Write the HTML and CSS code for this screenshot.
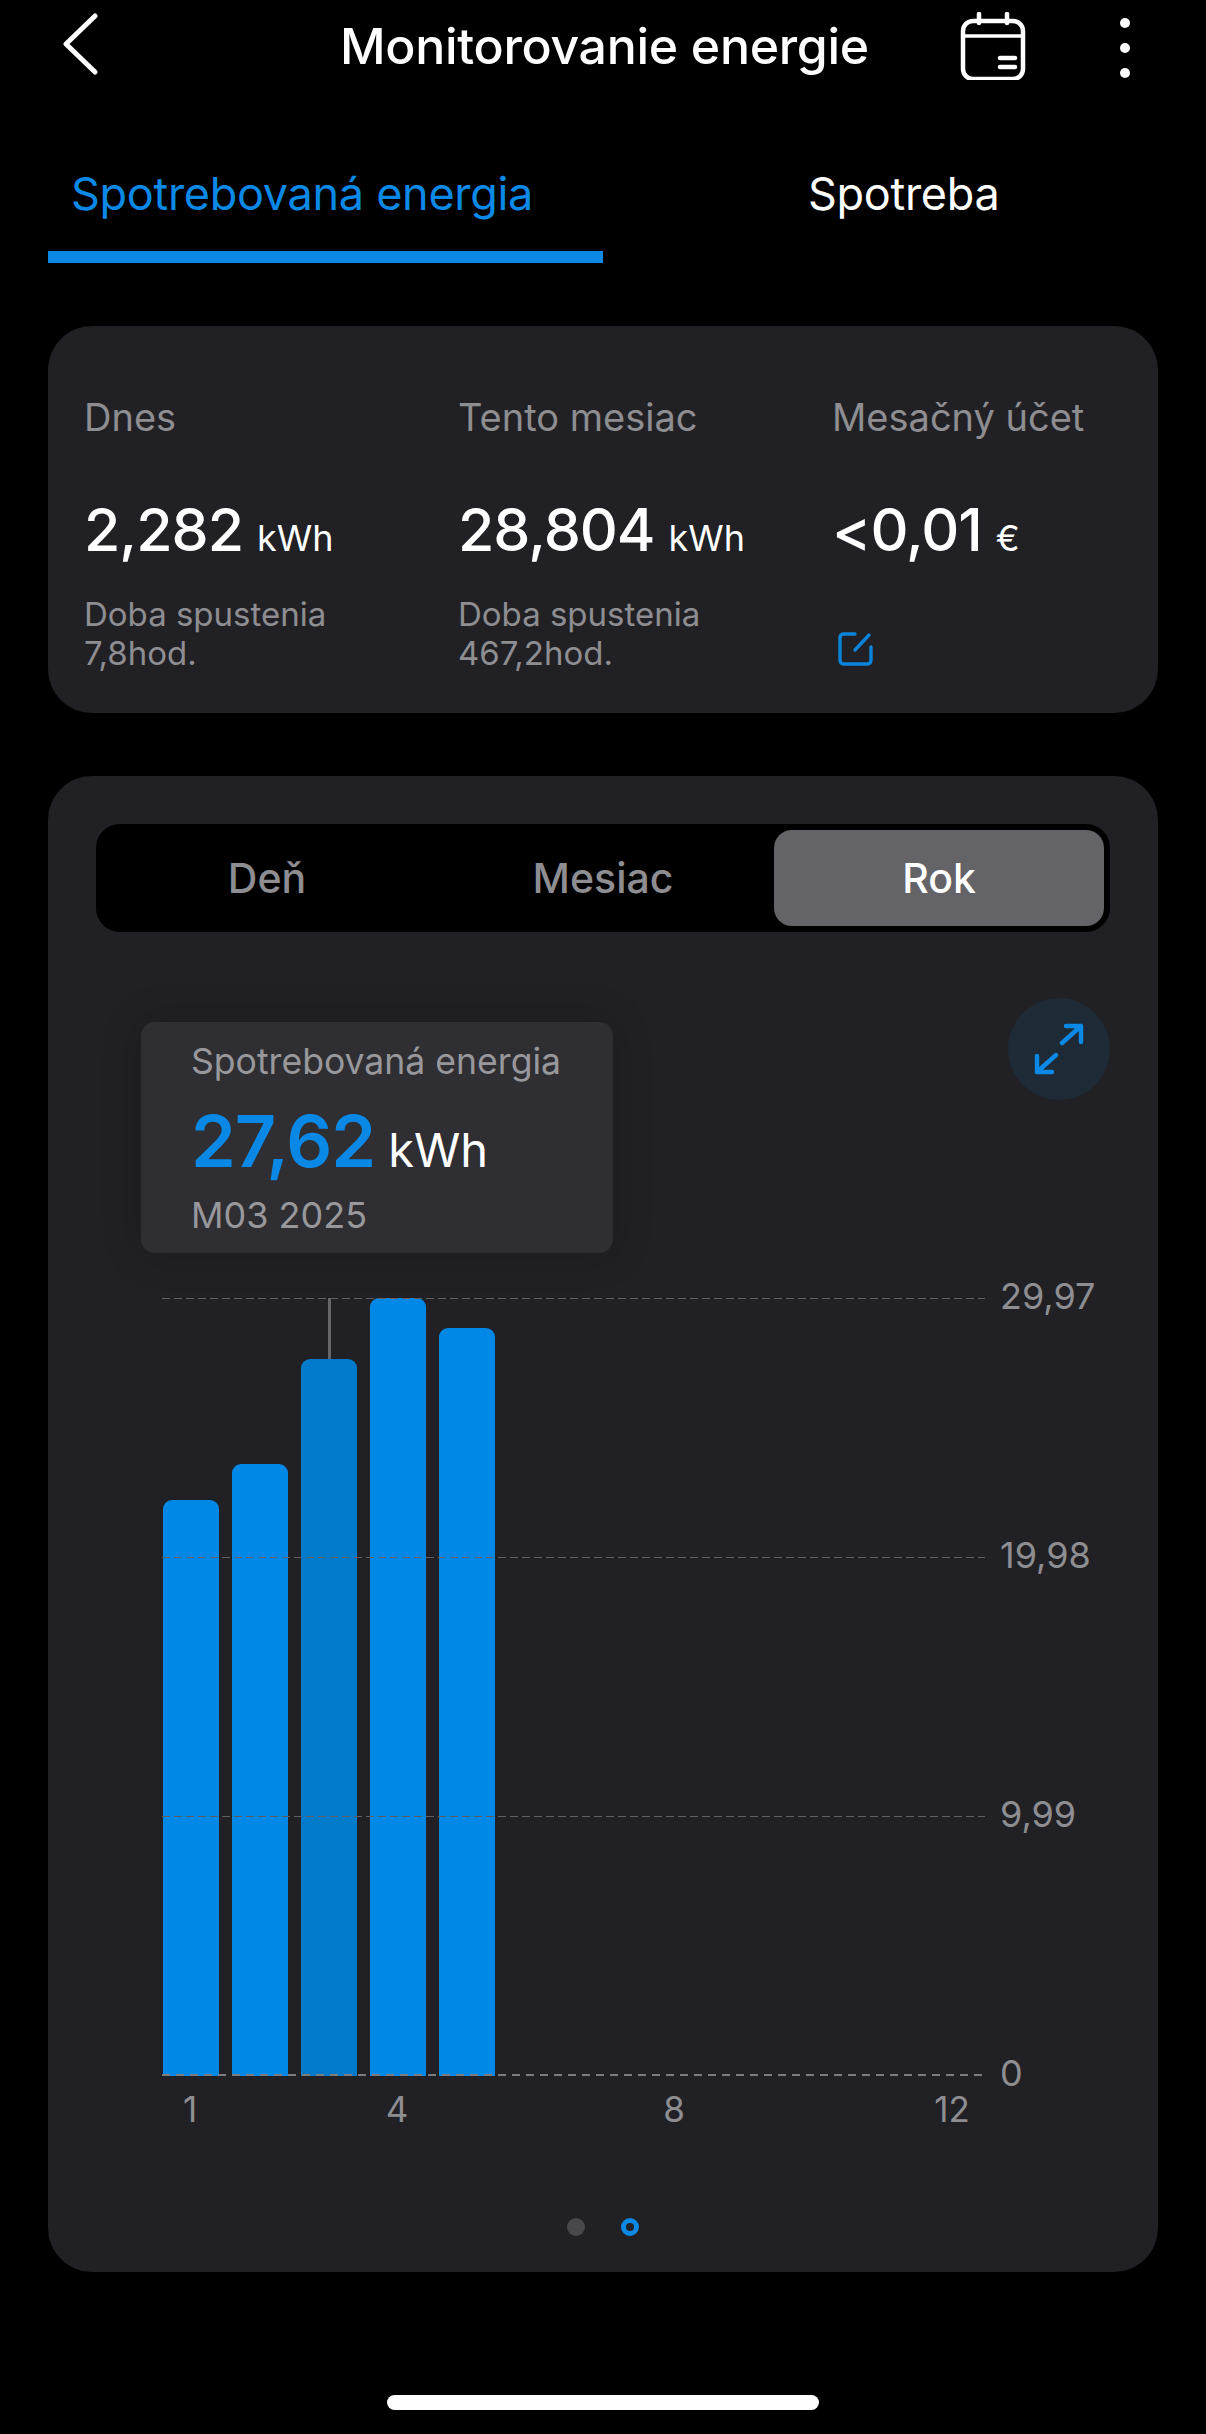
FILE: index.html
```html
<!DOCTYPE html>
<html lang="sk">
<head>
<meta charset="utf-8">
<title>Monitorovanie energie</title>
<link rel="stylesheet" href="styles.css">
</head>
<body>
<div class="page">

  <div class="header">
    <svg class="back-icon" width="36" height="62" viewBox="0 0 36 62"><path d="M33 3 L4 31 L33 59" fill="none" stroke="#fff" stroke-width="5" stroke-linecap="round" stroke-linejoin="round"/></svg>
    <div class="title">Monitorovanie energie</div>
    <svg class="cal-icon" width="66" height="68" viewBox="0 0 66 68">
      <rect x="3" y="9" width="60" height="58" rx="10" fill="none" stroke="#fff" stroke-width="4.5"/>
      <path d="M3 24 H63" stroke="#fff" stroke-width="3.5"/>
      <path d="M19 2 V11 M47 2 V11" stroke="#fff" stroke-width="4.5" stroke-linecap="round"/>
      <path d="M40 46 H55 M40 55 H55" stroke="#fff" stroke-width="4.5" stroke-linecap="round"/>
    </svg>
    <svg class="more-icon" width="12" height="62" viewBox="0 0 12 62">
      <circle cx="6" cy="6" r="5"/><circle cx="6" cy="31" r="5"/><circle cx="6" cy="56" r="5"/>
    </svg>
  </div>

  <div class="tabs">
    <div class="tab tab-on">Spotrebovaná energia</div>
    <div class="tab tab-off">Spotreba</div>
  </div>

  <div class="card stats">
    <div class="stat">
      <div class="stat-label">Dnes</div>
      <div class="stat-value">2,282<span class="unit">kWh</span></div>
      <div class="stat-note">Doba spustenia<br>7,8hod.</div>
    </div>
    <div class="stat">
      <div class="stat-label">Tento mesiac</div>
      <div class="stat-value">28,804<span class="unit">kWh</span></div>
      <div class="stat-note">Doba spustenia<br>467,2hod.</div>
    </div>
    <div class="stat">
      <div class="stat-label">Mesačný účet</div>
      <div class="stat-value">&lt;0,01<span class="unit">€</span></div>
      <div class="stat-note">
        <svg class="edit-icon" width="36" height="36" viewBox="0 0 36 36">
          <path d="M17 3 H6 Q2 3 2 7 V29 Q2 33 6 33 H29 Q33 33 33 29 V16" fill="none" stroke="#0a84db" stroke-width="3.4" stroke-linecap="round"/>
          <path d="M17 19 L31 4" fill="none" stroke="#0a84db" stroke-width="3.4" stroke-linecap="round"/>
        </svg>
      </div>
    </div>
  </div>

  <div class="card chart-card">
    <div class="segment">
      <div class="seg-item">Deň</div>
      <div class="seg-item">Mesiac</div>
      <div class="seg-item seg-on">Rok</div>
    </div>

    <div class="chart">
      <div class="tooltip">
        <div class="tip-label">Spotrebovaná energia</div>
        <div class="tip-value">27,62<span class="tip-unit">kWh</span></div>
        <div class="tip-date">M03 2025</div>
      </div>
      <div class="expand">
        <svg width="54" height="52" viewBox="0 0 54 52">
          <path d="M30 20 L49 3 M34 3 H49 V19 M24 32 L5 49 M5 33 V49 H20" fill="none" stroke="#0a8ae6" stroke-width="4.4" stroke-linecap="round" stroke-linejoin="round"/>
        </svg>
      </div>

      <div class="plot">
        <div class="bars">
          <div class="bar" style="height:576px"></div>
          <div class="bar" style="height:612px"></div>
          <div class="bar bar-sel" style="height:717px"><div class="marker"></div></div>
          <div class="bar" style="height:778px"></div>
          <div class="bar" style="height:748px"></div>
        </div>
        <div class="grid-rows">
          <div class="grid-row"><div class="dash"></div><span class="y-label">29,97</span></div>
          <div class="grid-row"><div class="dash"></div><span class="y-label">19,98</span></div>
          <div class="grid-row"><div class="dash"></div><span class="y-label">9,99</span></div>
          <div class="grid-row"><div class="dash dash-base"></div><span class="y-label">0</span></div>
        </div>
      </div>

      <div class="x-axis">
        <span class="x-label x1">1</span>
        <span class="x-label x4">4</span>
        <span class="x-label x8">8</span>
        <span class="x-label x12">12</span>
      </div>
    </div>

    <div class="pager">
      <span class="pdot"></span>
      <span class="pdot pdot-on"></span>
    </div>
  </div>

  <div class="home-bar"></div>
</div>
</body>
</html>
```

FILE: styles.css
```css
* {
	box-sizing: border-box;
}
html, body {
	margin: 0;
	background-color: #000;
}
.page {
	width: 1206px;
	height: 2434px;
	overflow: hidden;
	font-family: Inter, "Noto Sans", sans-serif;
	color: #fff;
	position: relative;
}

/* header */
.header {
	display: flex;
	align-items: flex-start;
	height: 150px;
	padding-left: 62px;
}
.back-icon {
	margin-top: 13px;
}
.title {
	margin-left: 242px;
	width: 528px;
	font-size: 50px;
	line-height: 56px;
	margin-top: 18px;
	font-weight: 500;
	letter-spacing: -0.3px;
	white-space: nowrap;
}
.cal-icon {
	margin-left: 92px;
	margin-top: 12px;
}
.more-icon {
	margin-left: 93px;
	margin-top: 17px;
	fill: #fff;
}

/* tabs */
.tabs {
	display: flex;
	margin: 0 48px;
	height: 113px;
}
.tab {
	width: 555px;
	font-size: 45px;
	line-height: 88px;
	white-space: nowrap;
	letter-spacing: -0.3px;
}
.tab-on {
	color: #0a8ae6;
	padding-left: 23px;
	border-bottom: 12px solid #0a88e4;
}
.tab-off {
	padding-left: 205px;
}

/* cards */
.card {
	margin: 0 48px;
	background-color: #212125;
	border-radius: 44px;
}
.stats {
	margin-top: 63px;
	height: 387px;
	padding: 66px 0 0 36px;
	display: grid;
	grid-template-columns: 374px 374px 1fr;
}
.stat-label {
	font-size: 38px;
	line-height: 50px;
	color: #8e8e92;
	white-space: nowrap;
}
.stat-value {
	margin-top: 52px;
	font-size: 59px;
	line-height: 72px;
	font-weight: 500;
	letter-spacing: -1px;
	white-space: nowrap;
}
.unit {
	font-size: 36px;
	font-weight: 400;
	letter-spacing: 0;
	margin-left: 14px;
}
.stat-note {
	margin-top: 21px;
	font-size: 33px;
	line-height: 39px;
	color: #8e8e92;
	white-space: nowrap;
}
.edit-icon {
	display: block;
	margin: 57px 0 0 6px;
}

.chart-card {
	margin-top: 63px;
	height: 1496px;
	padding: 48px 48px 0;
	position: relative;
}
.segment {
	display: grid;
	grid-template-columns: 330px 342px 330px;
	height: 108px;
	padding: 6px;
	background-color: #000;
	border-radius: 24px;
}
.seg-item {
	text-align: center;
	font-size: 41px;
	line-height: 96px;
	font-weight: 500;
	color: #8e8e92;
}
.seg-on {
	background-color: #636368;
	border-radius: 18px;
	color: #fff;
}

/* chart */
.chart {
	position: relative;
	height: 1300px;
}
.tooltip {
	position: absolute;
	left: 45px;
	top: 90px;
	width: 472px;
	height: 231px;
	padding: 18px 0 0 50px;
	background-color: #2e2e33;
	border-radius: 14px;
	box-shadow: 0 0 40px rgba(0, 0, 0, 0.18);
	z-index: 2;
}
.tip-label {
	font-size: 35.6px;
	line-height: 44px;
	color: #98989c;
	white-space: nowrap;
}
.tip-value {
	font-size: 72px;
	line-height: 86px;
	margin-top: 14px;
	font-weight: 600;
	letter-spacing: -1px;
	color: #0a88e6;
	white-space: nowrap;
}
.tip-unit {
	font-size: 47px;
	font-weight: 400;
	letter-spacing: 0;
	color: #fff;
	margin-left: 13px;
}
.tip-date {
	font-size: 36px;
	line-height: 44px;
	color: #98989c;
}
.expand {
	position: absolute;
	right: 0;
	top: 66px;
	width: 102px;
	height: 102px;
	border-radius: 50%;
	background-color: #1e2a35;
	display: flex;
	align-items: center;
	justify-content: center;
}
.plot {
	position: absolute;
	left: 66px;
	top: 347px;
	width: 950px;
	height: 800px;
}
.bars {
	position: absolute;
	left: 1px;
	bottom: 3px;
	display: flex;
	align-items: flex-end;
	gap: 13.5px;
}
.bar {
	width: 55.5px;
	background-color: #0088e6;
	border-radius: 9px 9px 0 0;
	position: relative;
}
.bar-sel {
	background-color: #007bc9;
}
.marker {
	position: absolute;
	left: 26.5px;
	bottom: 100%;
	width: 3px;
	height: 61px;
	background-color: #66666a;
}
.grid-rows {
	position: absolute;
	left: 0;
	top: 0;
	width: 100%;
	height: 800px;
	display: flex;
	flex-direction: column;
	gap: 221px;
}
.grid-row {
	display: flex;
	align-items: center;
	height: 38px;
}
.dash {
	width: 823px;
	height: 1px;
	background-image: repeating-linear-gradient(to right, #5e5e62 0 8px, transparent 8px 12px);
}
.dash-base {
	height: 2px;
	background-image: repeating-linear-gradient(to right, #7c7c80 0 8px, transparent 8px 14px);
}
.y-label {
	margin-left: 15px;
	margin-top: -5px;
	font-size: 36px;
	color: #8e8e92;
	white-space: nowrap;
}
.x-axis {
	position: absolute;
	left: 0;
	top: 1155px;
	width: 100%;
	height: 44px;
	font-size: 35px;
	line-height: 44px;
	color: #8e8e92;
}
.x-label {
	position: absolute;
	transform: translateX(-50%);
}
.x1 { left: 94px; }
.x4 { left: 301px; }
.x8 { left: 578px; }
.x12 { left: 856px; }

.pager {
	display: flex;
	justify-content: center;
	gap: 36px;
	position: absolute;
	left: 0;
	right: 0;
	top: 1442px;
}
.pdot {
	width: 18px;
	height: 18px;
	border-radius: 50%;
	background-color: #48484c;
}
.pdot-on {
	background-color: transparent;
	border: 5px solid #0a88e6;
}

.home-bar {
	position: absolute;
	left: 387px;
	top: 2395px;
	width: 432px;
	height: 15px;
	border-radius: 8px;
	background-color: #fff;
}
```
